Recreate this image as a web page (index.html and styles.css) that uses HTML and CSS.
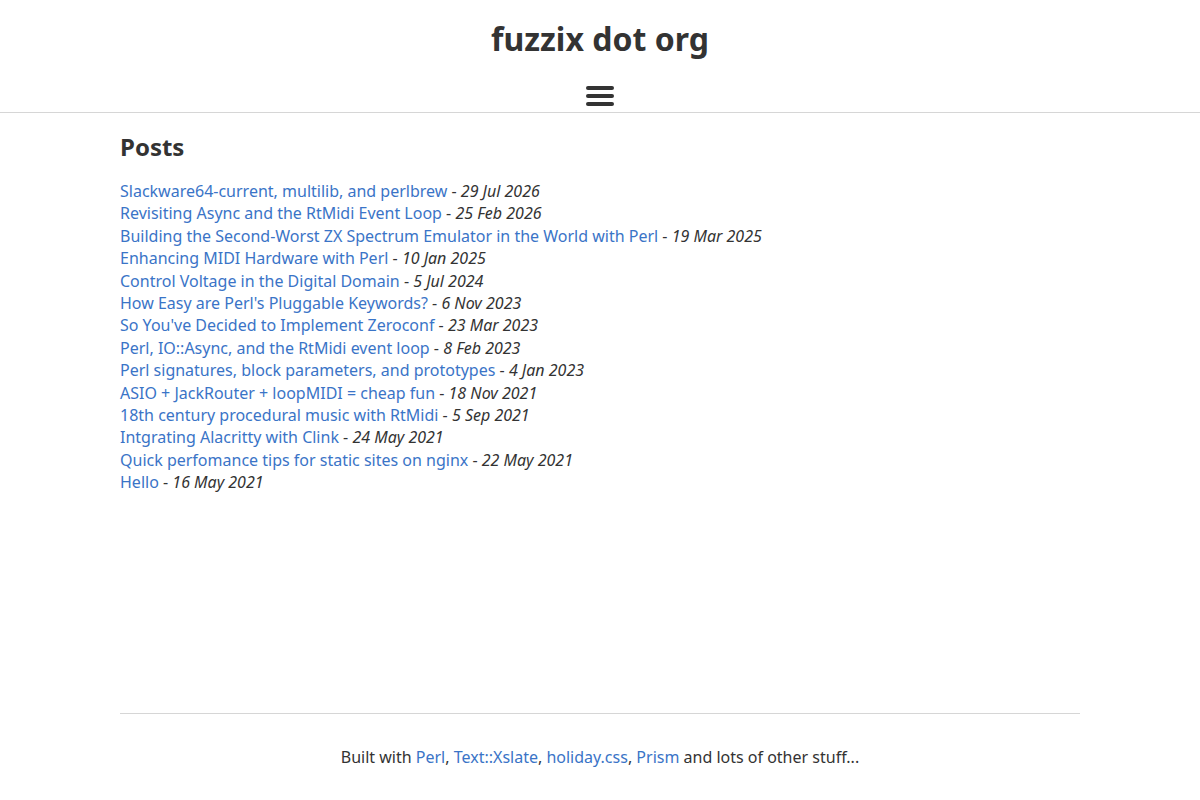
FILE: index.html
```html
<!DOCTYPE html>
<html lang="en">
<head>
<meta charset="utf-8">
<title>fuzzix dot org</title>
<link rel="stylesheet" href="styles.css">
</head>
<body>
<header class="site-header">
  <h1 class="site-title">fuzzix dot org</h1>
  <button class="menu-toggle" aria-label="Menu">
    <span class="bar"></span><span class="bar"></span><span class="bar"></span>
  </button>
</header>
<main class="content">
  <h2 class="section-title">Posts</h2>
  <ul class="posts">
    <li><a href="#">Slackware64-current, multilib, and perlbrew</a> - <em>29 Jul 2026</em></li>
    <li><a href="#">Revisiting Async and the RtMidi Event Loop</a> - <em>25 Feb 2026</em></li>
    <li><a href="#">Building the Second-Worst ZX Spectrum Emulator in the World with Perl</a> - <em>19 Mar 2025</em></li>
    <li><a href="#">Enhancing MIDI Hardware with Perl</a> - <em>10 Jan 2025</em></li>
    <li><a href="#">Control Voltage in the Digital Domain</a> - <em>5 Jul 2024</em></li>
    <li><a href="#">How Easy are Perl's Pluggable Keywords?</a> - <em>6 Nov 2023</em></li>
    <li><a href="#">So You've Decided to Implement Zeroconf</a> - <em>23 Mar 2023</em></li>
    <li><a href="#">Perl, IO::Async, and the RtMidi event loop</a> - <em>8 Feb 2023</em></li>
    <li><a href="#">Perl signatures, block parameters, and prototypes</a> - <em>4 Jan 2023</em></li>
    <li><a href="#">ASIO + JackRouter + loopMIDI = cheap fun</a> - <em>18 Nov 2021</em></li>
    <li><a href="#">18th century procedural music with RtMidi</a> - <em>5 Sep 2021</em></li>
    <li><a href="#">Intgrating Alacritty with Clink</a> - <em>24 May 2021</em></li>
    <li><a href="#">Quick perfomance tips for static sites on nginx</a> - <em>22 May 2021</em></li>
    <li><a href="#">Hello</a> - <em>16 May 2021</em></li>
  </ul>
</main>
<footer class="site-footer">
  <p>Built with <a href="#">Perl</a>, <a href="#">Text::Xslate</a>, <a href="#">holiday.css</a>, <a href="#">Prism</a> and lots of other stuff...</p>
</footer>
</body>
</html>
```

FILE: styles.css
```css
html, body {
  margin: 0;
  padding: 0;
  background: #fff;
}
body {
  font-family: "Noto Sans", "Open Sans", sans-serif;
  font-size: 16px;
  line-height: 1.4;
  color: #333;
}
a {
  color: #3a74c7;
  text-decoration: none;
}
.site-header {
  display: flex;
  flex-direction: column;
  align-items: center;
  padding-top: 20px;
  padding-bottom: 6px;
  border-bottom: 1px solid #d6d6d6;
}
.site-title {
  margin: 0;
  font-size: 32px;
  line-height: 38px;
  font-weight: 700;
  color: #333;
}
.menu-toggle {
  margin-top: 28px;
  padding: 0;
  border: 0;
  background: none;
  display: flex;
  flex-direction: column;
  gap: 4px;
  width: 28px;
}
.bar {
  display: block;
  width: 28px;
  height: 4px;
  border-radius: 2px;
  background: #333;
}
.content {
  width: 960px;
  margin: 0 auto;
  min-height: 581px;
}
.section-title {
  margin: 19px 0 18px;
  font-size: 24px;
  line-height: 30px;
  font-weight: 700;
  color: #333;
}
.posts {
  list-style: none;
  margin: 0;
  padding: 0;
}
.posts li {
  line-height: 22.4px;
}
.posts em {
  font-style: italic;
}
.site-footer {
  width: 960px;
  margin: 0 auto;
  border-top: 1px solid #d6d6d6;
  text-align: center;
}
.site-footer p {
  margin: 32px 0 0;
  line-height: 22px;
}
```
